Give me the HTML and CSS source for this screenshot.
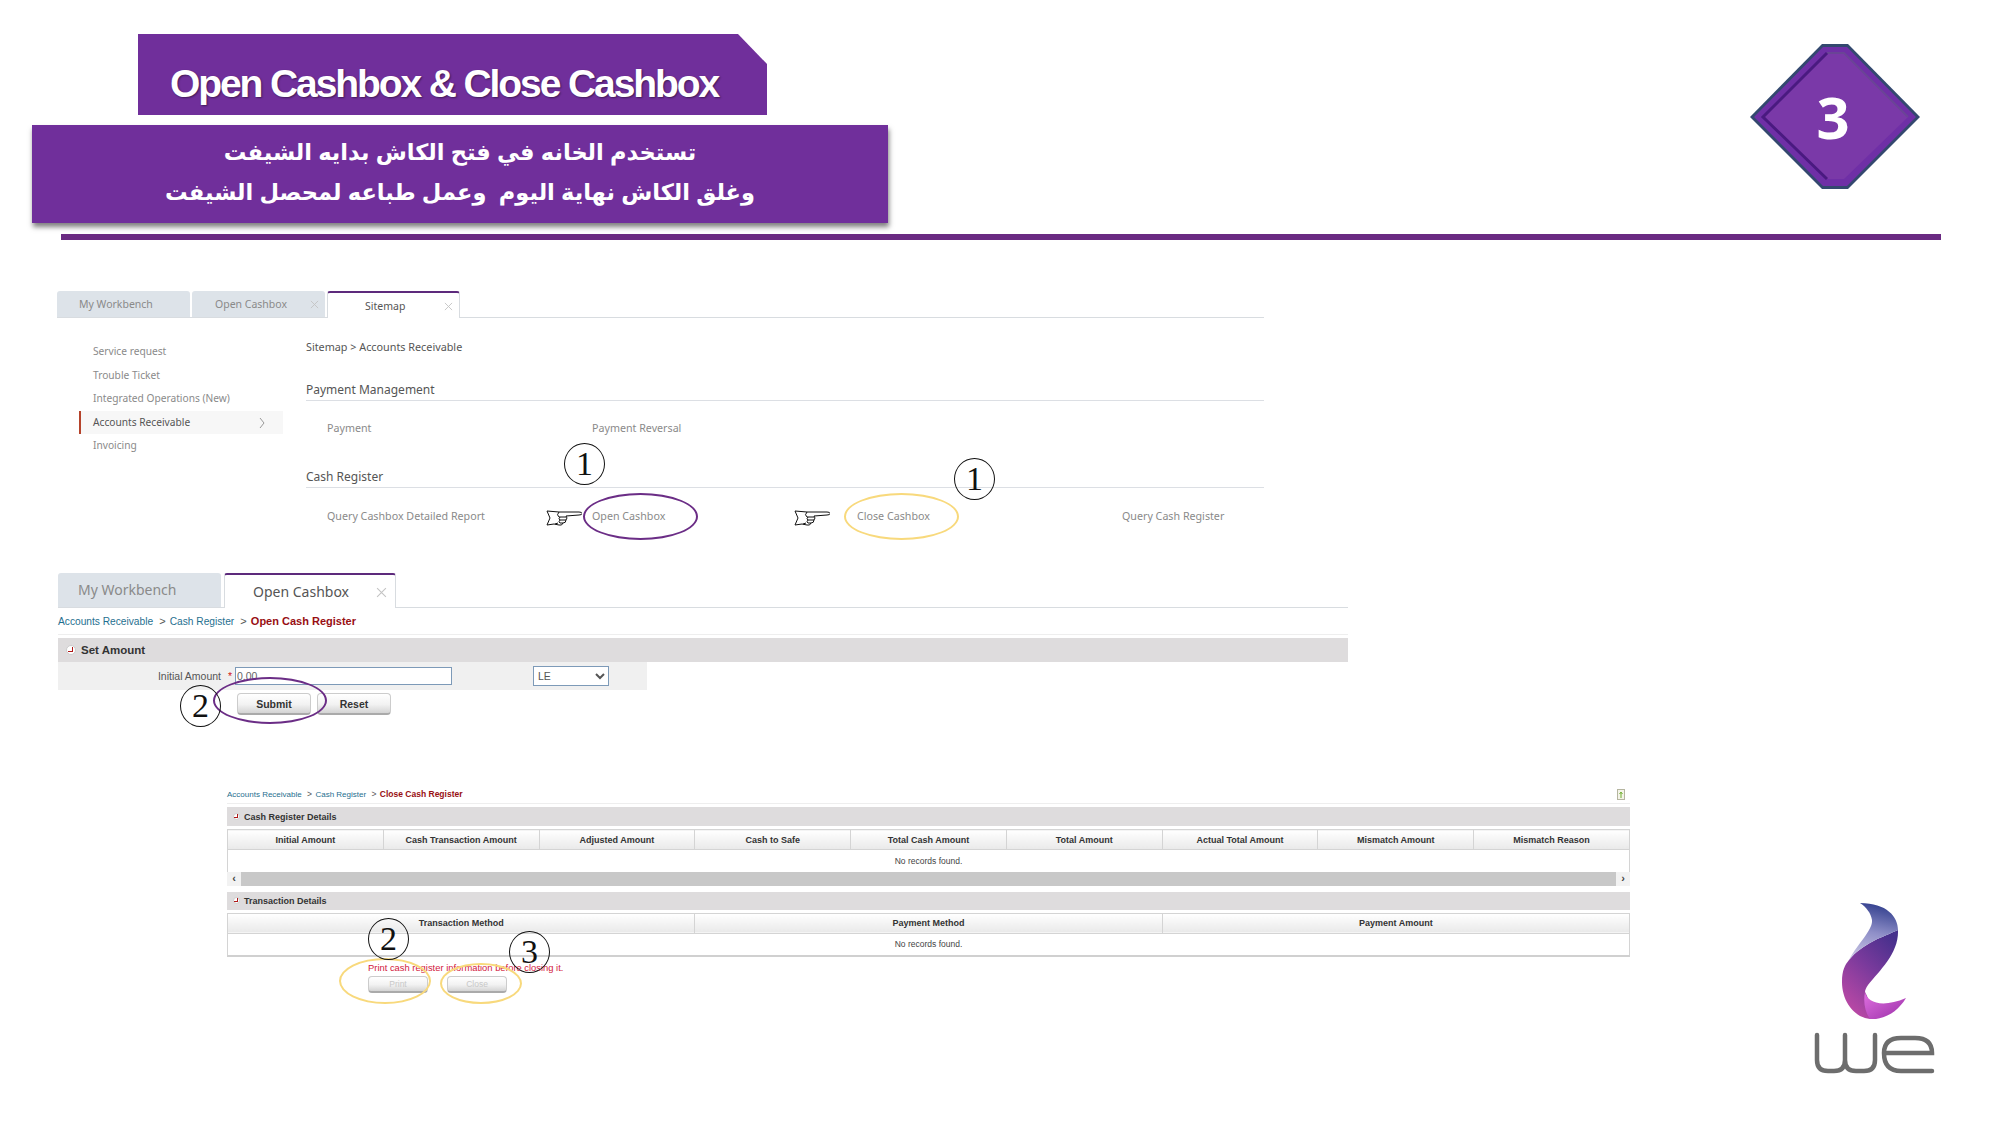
FILE: index.html
```html
<!DOCTYPE html>
<html lang="en">
<head>
  <meta charset="UTF-8" />
  <title>Open Cashbox &amp; Close Cashbox</title>
  <link rel="stylesheet" href="styles.css">
</head>
<body>
<div class="slide">

  <header>
    <h1 class="title">Open Cashbox &amp; Close Cashbox</h1>
    <div class="subtitle" lang="ar" dir="rtl">
      <p>تستخدم الخانه في فتح الكاش بدايه الشيفت</p>
      <p>وغلق الكاش نهاية اليوم &nbsp;وعمل طباعه لمحصل الشيفت</p>
    </div>
    <div class="rule"></div>
  </header>

  <section class="sitemap">
    <div class="tabs">
      <div class="tab">My Workbench</div>
      <div class="tab">Open Cashbox<svg class="tab-x" viewBox="0 0 10 10"><path d="M1 1l8 8M9 1l-8 8"/></svg></div>
      <div class="tab active">Sitemap<svg class="tab-x" viewBox="0 0 10 10"><path d="M1 1l8 8M9 1l-8 8"/></svg></div>
    </div>
    <div class="sitemap-body">
      <ul class="side-menu">
        <li>Service request</li>
        <li>Trouble Ticket</li>
        <li>Integrated Operations (New)</li>
        <li class="current">Accounts Receivable<svg class="chevron" viewBox="0 0 6 12"><path d="M1 1l4 5-4 5"/></svg></li>
        <li>Invoicing</li>
      </ul>
      <div class="sitemap-main">
        <div class="crumb">Sitemap &gt; Accounts Receivable</div>
        <h3>Payment Management</h3>
        <div class="links">
          <span>Payment</span>
          <span>Payment Reversal</span>
        </div>
        <h3>Cash Register</h3>
        <div class="links">
          <span>Query Cashbox Detailed Report</span>
          <span>Open Cashbox</span>
          <span>Close Cashbox</span>
          <span>Query Cash Register</span>
        </div>
      </div>
    </div>
  </section>

  <section class="open-panel">
    <div class="tabs big">
      <div class="tab">My Workbench</div>
      <div class="tab active">Open Cashbox<svg class="tab-x" viewBox="0 0 10 10"><path d="M1 1l8 8M9 1l-8 8"/></svg></div>
    </div>
    <div class="path">
      <a>Accounts Receivable</a> <i class="sep">&gt;</i> <a>Cash Register</a> <i class="sep">&gt;</i> <b>Open Cash Register</b>
    </div>
    <div class="group-head"><i class="toggle"></i>Set Amount</div>
    <div class="form-row">
      <label>Initial Amount</label><em>*</em>
      <input type="text" value="0.00">
      <select><option>LE</option></select>
    </div>
    <div class="actions">
      <button>Submit</button>
      <button>Reset</button>
    </div>
  </section>

  <section class="close-panel">
    <div class="path small">
      <div><a>Accounts Receivable</a> <i class="sep">&gt;</i> <a>Cash Register</a> <i class="sep">&gt;</i> <b>Close Cash Register</b></div>
      <svg class="help" viewBox="0 0 8 11"><rect x="0.5" y="0.5" width="7" height="10" fill="#f4f4e8" stroke="#b5b5a0"/><path d="M4 9V4M2.5 5L4 3l1.5 2" fill="none" stroke="#6fae2e"/></svg>
    </div>
    <div class="group-head"><i class="toggle"></i>Cash Register Details</div>
    <table class="grid nine">
      <tr>
        <th>Initial Amount</th>
        <th>Cash Transaction Amount</th>
        <th>Adjusted Amount</th>
        <th>Cash to Safe</th>
        <th>Total Cash Amount</th>
        <th>Total Amount</th>
        <th>Actual Total Amount</th>
        <th>Mismatch Amount</th>
        <th>Mismatch Reason</th>
      </tr>
      <tr><td colspan="9">No records found.</td></tr>
    </table>
    <div class="scrollbar">
      <span class="arrow">&lsaquo;</span>
      <span class="arrow">&rsaquo;</span>
    </div>
    <div class="group-head second"><i class="toggle"></i>Transaction Details</div>
    <table class="grid three">
      <tr>
        <th>Transaction Method</th>
        <th>Payment Method</th>
        <th>Payment Amount</th>
      </tr>
      <tr><td colspan="3">No records found.</td></tr>
    </table>
    <p class="warning">Print cash register information before closing it.</p>
    <div class="actions small">
      <button disabled>Print</button>
      <button disabled>Close</button>
    </div>
  </section>

  <!-- things lying over the screenshots -->
  <svg class="badge" viewBox="0 0 170 145">
    <polygon points="72,0 98,0 170,73 98,145 72,145 0,73" fill="#33486f"/>
    <polygon points="73,3 97,3 166,73 97,142 73,142 4,73" fill="#6f2fa6"/>
    <polygon points="77,9 94,9 158,73 94,135 77,135 13,73" fill="#7a39a8"/>
    <path d="M77 9H94L158 73" fill="none" stroke="#6a4496" stroke-width="2"/>
    <path d="M77 9L13 73 77 135" fill="none" stroke="#4a1a80" stroke-width="3"/>
  </svg>
  <span class="badge-num">3</span>

  <svg class="hand hand-open" viewBox="0 0 36 18">
    <path d="M1 2L13 3H33Q36 3 36 4.5T33 6L20 7Q22 9 20 11Q20 14 17 14Q16 17 13 16L8 15L1 16L4 9Z"/>
    <path d="M13 3Q10 6 13 8H20M14 8Q12 10 14 11H20M14 11Q12 13 14 14H17M12 14L9 15"/>
  </svg>
  <svg class="hand hand-close" viewBox="0 0 36 18">
    <path d="M1 2L13 3H33Q36 3 36 4.5T33 6L20 7Q22 9 20 11Q20 14 17 14Q16 17 13 16L8 15L1 16L4 9Z"/>
    <path d="M13 3Q10 6 13 8H20M14 8Q12 10 14 11H20M14 11Q12 13 14 14H17M12 14L9 15"/>
  </svg>

  <span class="ring purple ring-open"></span>
  <span class="ring yellow ring-close"></span>
  <span class="ring purple ring-submit"></span>
  <span class="ring yellow ring-print"></span>
  <span class="ring yellow ring-closebtn"></span>

  <span class="step step-a">1</span>
  <span class="step step-b">1</span>
  <span class="step step-c">2</span>
  <span class="step step-d">2</span>
  <span class="step step-e">3</span>

  <svg class="logo" viewBox="0 0 180 210">
    <defs>
      <linearGradient id="swirlTop" x1="0.5" y1="0" x2="0.3" y2="1">
        <stop offset="0" stop-color="#34418f"/>
        <stop offset="0.5" stop-color="#8f8fc8"/>
        <stop offset="1" stop-color="#c9c6e4"/>
      </linearGradient>
      <linearGradient id="swirlBody" x1="0.8" y1="0" x2="0.2" y2="1">
        <stop offset="0" stop-color="#45308c"/>
        <stop offset="0.45" stop-color="#7a3a9c"/>
        <stop offset="1" stop-color="#c04aa6"/>
      </linearGradient>
      <linearGradient id="swirlTail" x1="0" y1="0" x2="1" y2="1">
        <stop offset="0" stop-color="#e070e0"/>
        <stop offset="1" stop-color="#9a2fa8"/>
      </linearGradient>
    </defs>
    <path fill="url(#swirlBody)" d="M118 50C119 73 100 90 88 105C86 108 85 110 85 112C92 125 92 135 90 139C73 137 62 120 62 102C62 90 65 85 69 80C83 63 103 57 118 50Z"/>
    <path fill="url(#swirlTop)" d="M80 23C107 23 118 37 118 50C103 57 83 63 69 80C78 63 93 50 92 40C91 33 86 27 80 23Z"/>
    <path fill="url(#swirlTail)" d="M85 112C87 123 103 128 126 118C117 133 103 140 90 139C85 132 83 122 85 112Z"/>
    <path class="logo-we" d="M37 155V180Q37 191 48 191H54Q65 191 65 180V155M65 180Q65 191 76 191H84Q95 191 95 180V155"/>
    <path class="logo-we" d="M104 173H152Q152 158 135 158H121Q104 158 104 173Q104 191 121 191H152"/>
  </svg>

</div>
</body>
</html>
```

FILE: styles.css
```css
* {
  box-sizing: border-box;
}
body {
  margin: 0;
  background: white;
  font-family: "Noto Sans", sans-serif;
}
.slide {
  position: relative;
  width: 2000px;
  height: 1125px;
  overflow: hidden;
  background: white;
}

/* header */
.title {
  margin: 34px 0 0 138px;
  width: 629px;
  height: 81px;
  padding: 27px 0 0 32px;
  background: #702f9b;
  clip-path: polygon(0 0, 600px 0, 100% 30px, 100% 100%, 0 100%);
  color: white;
  font-family: "Liberation Sans", sans-serif;
  font-size: 39px;
  line-height: 46px;
  font-weight: bold;
  letter-spacing: -2.1px;
  white-space: nowrap;
  text-shadow: 1px 1px 2px rgba(0,0,0,0.45);
}
.subtitle {
  margin: 10px 0 0 32px;
  width: 856px;
  height: 98px;
  padding-top: 8px;
  background: #702f9b;
  box-shadow: 1px 4px 5px rgba(0,0,0,0.5);
  color: white;
  font-family: "Liberation Sans", "DejaVu Sans", sans-serif;
  font-weight: bold;
  font-size: 22.5px;
  line-height: 40px;
  text-align: center;
}
.subtitle p {
  margin: 0;
}
.rule {
  margin: 11px 0 0 61px;
  width: 1880px;
  height: 6px;
  background: #6a2a82;
}

/* tabs */
.tabs {
  display: flex;
  gap: 2px;
  height: 27px;
  border-bottom: 1px solid #d8dce0;
}
.tab {
  position: relative;
  width: 133px;
  height: 26px;
  padding-left: 22px;
  background: #dde3e9;
  border-radius: 3px 3px 0 0;
  color: #8a8a8a;
  font-size: 10.5px;
  line-height: 26px;
}
.tab:nth-child(2) {
  padding-left: 23px;
}
.tab.active {
  height: 27px;
  padding-left: 37px;
  background: white;
  border: 1px solid #d8dce0;
  border-top: 2px solid #5d2a7c;
  border-bottom: 0;
  color: #555;
}
.tab-x {
  position: absolute;
  top: 9px;
  right: 6px;
  width: 9px;
  height: 9px;
  fill: none;
  stroke: #c4c4c4;
  stroke-width: 1;
}

.tabs.big {
  height: 35px;
  gap: 3px;
}
.tabs.big .tab {
  width: 163px;
  height: 34px;
  padding-left: 20px;
  font-size: 14px;
  line-height: 34px;
}
.tabs.big .tab.active {
  width: 172px;
  height: 35px;
  padding-left: 28px;
  font-size: 14px;
}
.tabs.big .tab-x {
  top: 12px;
  right: 8px;
  width: 11px;
  height: 11px;
}

/* sitemap screenshot */
.sitemap {
  margin: 51px 0 0 57px;
  width: 1207px;
}
.sitemap-body {
  display: flex;
  gap: 23px;
}
.side-menu {
  flex: none;
  list-style: none;
  margin: 22px 0 0 22px;
  padding: 0;
  width: 204px;
  color: #8a8a8a;
  font-size: 10.2px;
}
.side-menu li {
  position: relative;
  height: 23.6px;
  padding-left: 14px;
  line-height: 23.6px;
}
.side-menu .current {
  background: #f7f7f7;
  border-left: 2px solid #b5432b;
  padding-left: 12px;
  color: #555;
}
.chevron {
  position: absolute;
  top: 6px;
  right: 18px;
  width: 6px;
  height: 12px;
  fill: none;
  stroke: #999;
}
.sitemap-main {
  flex: 1;
  min-width: 0;
  padding-top: 21px;
  color: #555;
}
.crumb {
  font-size: 10.8px;
  line-height: 16px;
}
.sitemap-main h3 {
  margin: 25px 0 0;
  height: 21px;
  border-bottom: 1px solid #dcdfe4;
  font-weight: normal;
  font-size: 12px;
  line-height: 20px;
}
.sitemap-main h3 + .links + h3 {
  margin-top: 31px;
}
.links {
  display: grid;
  grid-template-columns: repeat(4, 265px);
  margin-top: 19px;
  padding-left: 21px;
  color: #8a8a8a;
  font-size: 10.7px;
  line-height: 16px;
}
.sitemap-main h3 + .links + h3 + .links {
  margin-top: 20px;
}

/* breadcrumbs and grey group bars */
.path {
  height: 27px;
  border-bottom: 1px solid #eee;
  font-family: "Liberation Sans", sans-serif;
  font-size: 11px;
  line-height: 26px;
  color: #1f6f8f;
}
.path a {
  font-size: 10.2px;
}
.sep {
  margin: 0 1px 0 3px;
  color: #555;
  font-style: normal;
}
.path b {
  color: #980e12;
}
.path.small {
  display: flex;
  justify-content: space-between;
  height: 18px;
  padding-right: 5px;
  font-size: 8.5px;
  line-height: 17px;
}
.path.small a {
  font-size: 8px;
}
.help {
  width: 8px;
  height: 11px;
  margin-top: 3px;
}
.group-head {
  display: flex;
  align-items: center;
  gap: 5px;
  margin-top: 3px;
  height: 24px;
  padding-left: 8px;
  background: #dedcdd;
  color: #333;
  font-family: "Liberation Sans", sans-serif;
  font-weight: bold;
  font-size: 11.5px;
}
.toggle {
  position: relative;
  width: 10px;
  height: 10px;
  border-radius: 50%;
  background: white;
  border: 1px solid #ccc;
}
.toggle::after {
  content: "";
  position: absolute;
  left: 1px;
  top: 1px;
  width: 4px;
  height: 4px;
  border-right: 1.5px solid #b01818;
  border-bottom: 1.5px solid #b01818;
}

/* open cashbox screenshot */
.open-panel {
  margin: 49px 0 0 58px;
  width: 1290px;
}
.form-row {
  display: flex;
  align-items: center;
  width: 589px;
  height: 28px;
  background: #f0f0f0;
  color: #555;
  font-family: "Liberation Sans", sans-serif;
  font-size: 10.5px;
}
.form-row label {
  width: 163px;
  text-align: right;
}
.form-row em {
  margin-left: 7px;
  width: 7px;
  color: #d01818;
  font-style: normal;
}
.form-row input {
  width: 217px;
  height: 18px;
  padding: 2px 1px;
  border: 1px solid #7d9ab8;
  background: white;
  color: #666;
  font-family: inherit;
  font-size: 10.5px;
}
.form-row select {
  margin-left: 81px;
  width: 76px;
  height: 20px;
  border: 1px solid #7d9ab8;
  background: white;
  color: #555;
  font-family: inherit;
  font-size: 10.5px;
}
.actions {
  display: flex;
  gap: 6px;
  padding: 3px 0 0 179px;
}
.actions button {
  width: 74px;
  height: 22px;
  padding: 0;
  border: 1px solid #ccc;
  border-bottom: 2px solid #aaa;
  border-radius: 4px;
  background: linear-gradient(#fff, #f2f2f2 55%, #d4d4d4);
  color: #333;
  font-family: "Liberation Sans", sans-serif;
  font-weight: bold;
  font-size: 10.5px;
}

/* close cashbox screenshot */
.close-panel {
  margin: 71px 0 0 227px;
  width: 1403px;
}
.close-panel .group-head {
  height: 19px;
  gap: 4px;
  padding-left: 6px;
  font-size: 9px;
}
.close-panel .group-head.second {
  margin-top: 6px;
  height: 18px;
}
.close-panel .toggle {
  width: 7px;
  height: 7px;
}
.close-panel .toggle::after {
  left: 0;
  top: 0;
  width: 3px;
  height: 3px;
  border-width: 1px;
}
.grid {
  width: 100%;
  margin-top: 3px;
  border-collapse: collapse;
  table-layout: fixed;
  font-family: "Liberation Sans", sans-serif;
  font-size: 9px;
}
.grid th {
  height: 20px;
  padding: 0;
  border: 1px solid #d4d4d4;
  background: linear-gradient(#fff, #e9e9e9);
  color: #333;
}
.grid td {
  height: 22px;
  padding: 0;
  border-left: 1px solid #d4d4d4;
  border-right: 1px solid #d4d4d4;
  color: #444;
  font-size: 8.5px;
  text-align: center;
}
.grid.three {
  border-bottom: 2px solid #d0d0d0;
}
.grid.three td {
  height: 23px;
}
.scrollbar {
  display: flex;
  justify-content: space-between;
  height: 14px;
  background: #c8c8c8;
}
.arrow {
  width: 14px;
  background: #f2f2f2;
  color: #444;
  font: bold 11px/13px "Liberation Sans", sans-serif;
  text-align: center;
}
.warning {
  margin: 4px 0 0 141px;
  color: #d2183c;
  font-family: "Liberation Sans", sans-serif;
  font-size: 9.4px;
  line-height: 14px;
}
.actions.small {
  gap: 19px;
  padding: 1px 0 0 141px;
}
.actions.small button {
  width: 60px;
  height: 17px;
  color: #c8c8c8;
  font-weight: normal;
  font-size: 8.5px;
}

/* overlays */
.badge {
  position: absolute;
  left: 1750px;
  top: 44px;
  width: 170px;
  height: 145px;
}
.badge-num {
  position: absolute;
  left: 1748px;
  top: 44px;
  width: 170px;
  height: 145px;
  color: white;
  font-family: "Open Sans", sans-serif;
  font-weight: bold;
  font-size: 58px;
  line-height: 145px;
  text-align: center;
}
.hand {
  position: absolute;
  top: 509px;
  width: 36px;
  height: 18px;
  fill: white;
  stroke: #111;
  stroke-width: 1;
}
.hand path + path {
  fill: none;
}
.hand-open {
  left: 546px;
}
.hand-close {
  left: 794px;
}
.ring {
  position: absolute;
  border-radius: 50%;
}
.ring.purple {
  border: 2.5px solid #6b2d86;
}
.ring.yellow {
  border: 2.5px solid #f8d97c;
}
.ring-open {
  left: 583px;
  top: 493px;
  width: 115px;
  height: 47px;
}
.ring-close {
  left: 844px;
  top: 493px;
  width: 115px;
  height: 47px;
}
.ring-submit {
  left: 213px;
  top: 677px;
  width: 114px;
  height: 47px;
}
.ring-print {
  left: 339px;
  top: 958px;
  width: 92px;
  height: 46px;
}
.ring-closebtn {
  left: 440px;
  top: 963px;
  width: 82px;
  height: 41px;
}
.step {
  position: absolute;
  width: 41px;
  height: 42px;
  border: 1.5px solid #111;
  border-radius: 50%;
  color: #111;
  font-family: "Liberation Serif", serif;
  font-size: 34px;
  line-height: 39px;
  text-align: center;
}
.step-a {
  left: 564px;
  top: 443px;
}
.step-b {
  left: 954px;
  top: 458px;
}
.step-c {
  left: 180px;
  top: 685px;
}
.step-d {
  left: 368px;
  top: 918px;
}
.step-e {
  left: 509px;
  top: 931px;
}
.logo {
  position: absolute;
  left: 1780px;
  top: 880px;
  width: 180px;
  height: 210px;
}
.logo-we {
  fill: none;
  stroke: #6d6d6d;
  stroke-width: 4.5;
  stroke-linecap: round;
}
```
